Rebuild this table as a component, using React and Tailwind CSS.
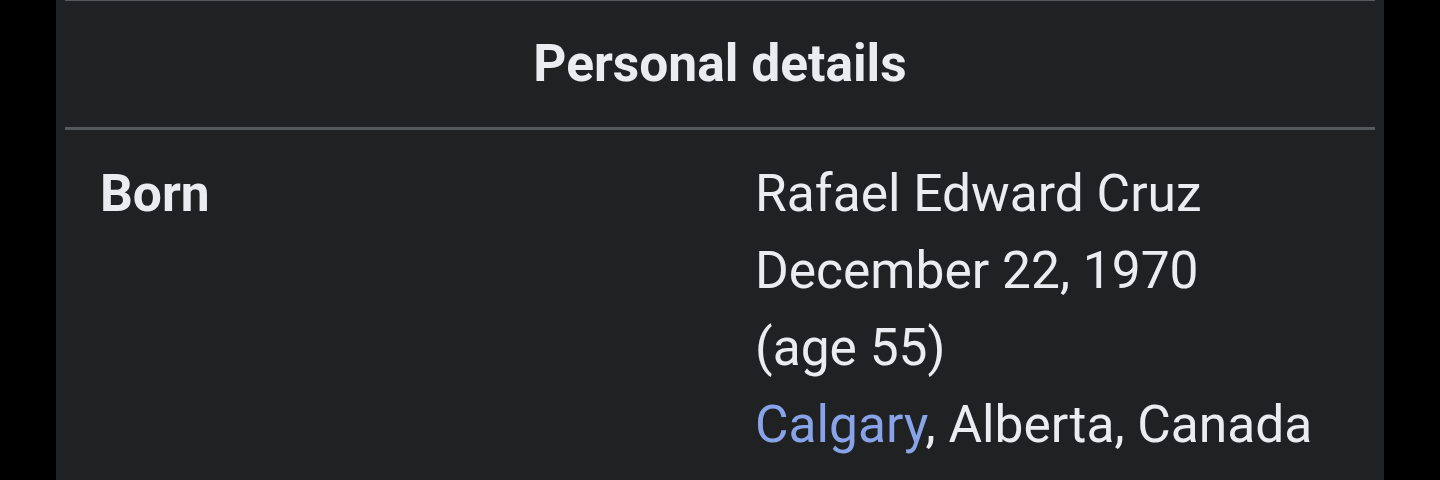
export default function App() {
  return (
    <div className="w-[1440px] h-[480px] bg-black overflow-hidden" style={{ fontFamily: 'Roboto, "Liberation Sans", sans-serif' }}>
      <div className="ml-[56px] w-[1328px] h-[480px] bg-[#202122] px-[9px]">
        <div className="h-px bg-[#54595d]" />
        <div className="pt-[24px] pb-[25px] text-center text-[51.5px] leading-[77px] font-bold text-[#eaecf0]">
          Personal details
        </div>
        <div className="h-[3px] bg-[#54595d]" />
        <div className="flex pt-[25px] text-[51.5px] leading-[77px] text-[#eaecf0]">
          <div className="w-[690px] pl-[35px] font-bold shrink-0">Born</div>
          <div className="flex flex-col">
            <span>Rafael Edward Cruz</span>
            <span>December 22, 1970</span>
            <span>(age 55)</span>
            <span>
              <span className="text-[#88a3e8]">Calgary</span>, Alberta, Canada
            </span>
          </div>
        </div>
      </div>
    </div>
  );
}
